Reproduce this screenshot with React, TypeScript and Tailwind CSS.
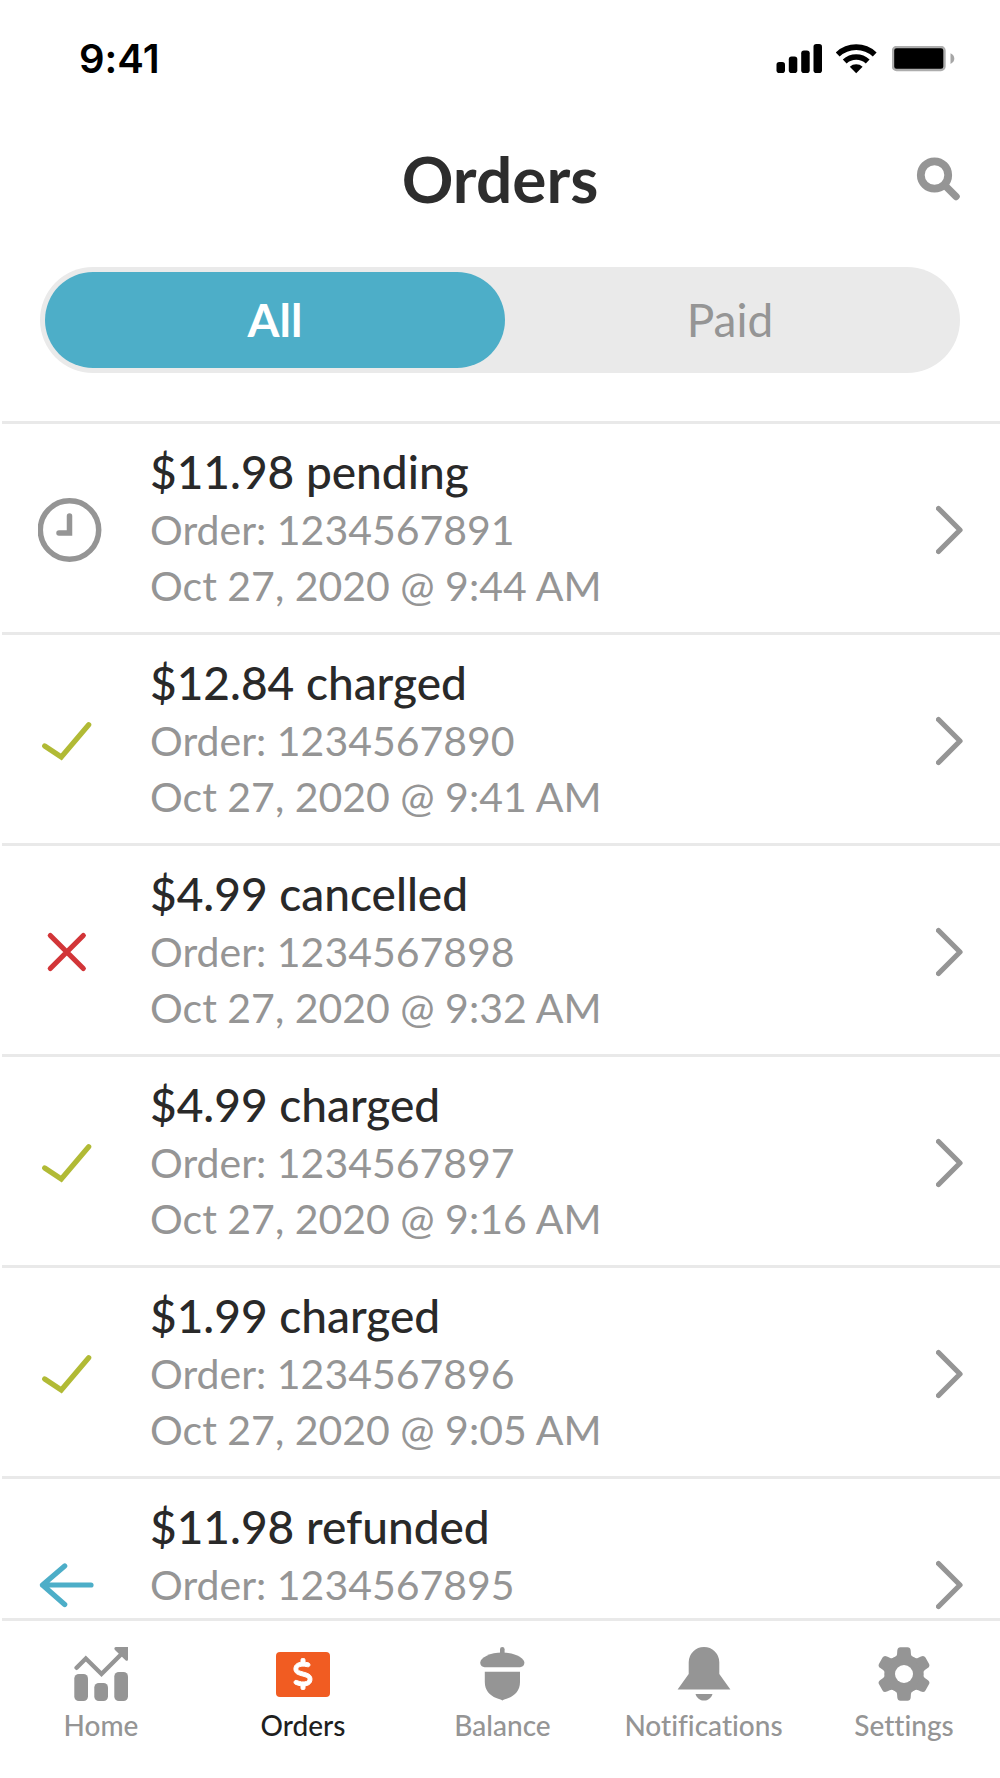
import React, { useState } from 'react';
import { FaDollarSign } from 'react-icons/fa6';

type Status = 'pending' | 'charged' | 'cancelled' | 'refunded';

interface Order {
  id: string;
  amount: string;
  status: Status;
  date?: string;
}

const orders: Order[] = [
  { id: '1234567891', amount: '$11.98', status: 'pending', date: 'Oct 27, 2020 @ 9:44 AM' },
  { id: '1234567890', amount: '$12.84', status: 'charged', date: 'Oct 27, 2020 @ 9:41 AM' },
  { id: '1234567898', amount: '$4.99', status: 'cancelled', date: 'Oct 27, 2020 @ 9:32 AM' },
  { id: '1234567897', amount: '$4.99', status: 'charged', date: 'Oct 27, 2020 @ 9:16 AM' },
  { id: '1234567896', amount: '$1.99', status: 'charged', date: 'Oct 27, 2020 @ 9:05 AM' },
  { id: '1234567895', amount: '$11.98', status: 'refunded' },
];

function StatusIcon({ status }: { status: Status }) {
  return (
    <svg
      viewBox="0 0 64 64"
      className="w-16 h-16 shrink-0"
      fill="none"
      strokeWidth="5.5"
      strokeLinecap="round"
      strokeLinejoin="round"
      aria-hidden="true"
    >
      {status === 'pending' && (
        <g stroke="#959595">
          <circle cx="31.500" cy="32" r="29.2" />
          <path d="M31.500 18v17H21" strokeLinejoin="miter" />
        </g>
      )}
      {status === 'charged' && <path d="M6.700 37l16.600 11L50.700 15.700" stroke="#b1ba35" strokeWidth="5.200" strokeLinejoin="miter" />}
      {status === 'cancelled' && <path d="M12.300 15.500l33 33M45.300 15.500l-33 33" stroke="#d23538" strokeWidth="5.200" />}
      {status === 'refunded' && <path d="M4.500 32H53M26.700 13L4.500 32l22.200 19.500" stroke="#4daec8" strokeWidth="5.200" />}
    </svg>
  );
}

function OrderRow({ order }: { order: Order }) {
  return (
    <li className="ml-0.5 h-[211px] border-t-[3px] border-[#e9e9e9]">
      <a href={`#order-${order.id}`} className="flex h-full items-center gap-12 pl-9 pr-9 pt-1">
        <StatusIcon status={order.status} />
        <div className="flex-1 h-[168px] leading-[56px] text-[41px] text-[#959595]">
          <h2 className="pb-1 text-[46px] leading-[52px] font-medium text-[#292929]">
            {order.amount} {order.status}
          </h2>
          <p>Order: {order.id}</p>
          {order.date && <p>{order.date}</p>}
        </div>
        <svg viewBox="0 0 28 50" className="w-7 h-[50px]" fill="none" stroke="#959595" strokeWidth="5.200" strokeLinecap="round" strokeLinejoin="round" aria-hidden="true">
          <path d="M2.500 3.500L24 25 2.500 46.500" />
        </svg>
      </a>
    </li>
  );
}

function StatusBar() {
  return (
    <div className="flex h-[118px] items-center justify-between pl-[79px] pr-[45px] text-black">
      <span className="font-['Inter',sans-serif] text-[40px] leading-[48px] font-semibold">9:41</span>
      <div className="flex items-center gap-3.5" aria-hidden="true">
        <svg viewBox="0 0 46 30" className="w-[46px] h-[30px]">
          <rect x="0.500" y="18" width="8.500" height="11" rx="2.800" />
          <rect x="12.800" y="12.500" width="8.500" height="16.500" rx="2.800" />
          <rect x="25.200" y="6.500" width="8.500" height="22.500" rx="2.800" />
          <rect x="37.500" y="0" width="8.500" height="29" rx="2.800" />
        </svg>
        <svg viewBox="0 0 42 30" className="w-[42px] h-[30px]" fill="none" stroke="#000" strokeWidth="5.600">
          <path d="M1.700 10.500a27 27 0 0 1 37 0" />
          <path d="M8.700 17.500a17 17 0 0 1 23 0" />
          <path d="M13.800 22.800a9.600 9.600 0 0 1 12.800 0L20.200 29.300z" fill="#000" stroke="none" />
        </svg>
        <svg viewBox="0 0 63 26" className="w-[63px] h-[26px]">
          <rect x="1" y="1" width="51.500" height="23" rx="3.500" fill="#000" stroke="#adadad" strokeWidth="2.400" />
          <path d="M58.500 7.300c2.600 1 3.800 3 3.800 5.300s-1.200 4.300-3.800 5.300z" fill="#a6a6a6" />
        </svg>
      </div>
    </div>
  );
}

function HomeIcon() {
  return (
    <svg viewBox="0 0 54 54" className="w-[54px] h-[54px]" fill="currentColor" aria-hidden="true">
      <rect x="0.300" y="27" width="13.700" height="27" rx="4.500" />
      <rect x="20.300" y="36" width="13.700" height="18" rx="4.500" />
      <rect x="40.300" y="25" width="13.700" height="29" rx="4.500" />
      <path d="M2.600 20.800L11.800 11.500 27.500 27 48 6.500" fill="none" stroke="currentColor" strokeWidth="4.400" strokeLinecap="round" />
      <path d="M42 0h12v12.300c0 1.600-1.500 1.900-2.500 1L41 3c-1.300-1.300-.6-3 1-3z" />
    </svg>
  );
}

function OrdersIcon() {
  return (
    <span className="flex h-[54px] items-center justify-center">
      <span className="flex h-[45px] w-[54px] items-center justify-center rounded bg-[#f15c22]">
        <FaDollarSign className="h-8 w-5 stroke-white stroke-[16px] text-white" aria-hidden="true" />
      </span>
    </span>
  );
}

function BalanceIcon() {
  return (
    <svg viewBox="0 0 45 54" className="w-[45px] h-[54px]" fill="currentColor" aria-hidden="true">
      <rect x="20" y="0" width="4.600" height="9" rx="2.300" />
      <path d="M22.300 5.500c12 0 22.100 5 22.100 10.300 0 2.600-2 4.400-4.400 4.400H4.600c-2.400 0-4.400-1.800-4.400-4.400C.2 10.500 10.300 5.500 22.300 5.500z" />
      <path d="M4.800 24.700h35.200V35c0 8.500-5 13.300-11.400 16-3 1-4.600 1.600-6.200 2.400-1.600-.8-3.200-1.400-6.200-2.400C9.800 48.300 4.800 43.500 4.800 35z" />
    </svg>
  );
}

function NotificationsIcon() {
  return (
    <svg viewBox="0 0 54 54" className="w-[54px] h-[54px]" fill="currentColor" aria-hidden="true">
      <path d="M11.700 15.300a15.300 15.300 0 0 1 30.600 0V27L53.400 42.500H.6L11.700 27z" />
      <path d="M18.500 47h17c-1.200 4-4.400 6.600-8.500 6.600s-7.300-2.600-8.500-6.600z" />
    </svg>
  );
}

function SettingsIcon() {
  return (
    <svg viewBox="-27 -27 54 54" className="w-[54px] h-[54px]" fill="currentColor" aria-hidden="true">
      <circle r="19.600" />
      {[0, 60, 120, 180, 240, 300].map((angle) => (
        <path
          key={angle}
          transform={`rotate(${angle})`}
          d="M-10-16.500Q-7-17.500-6.900-20.500L-6.700-23.500Q-6.300-26.800-3.500-26.800H3.500Q6.300-26.800 6.700-23.500L6.900-20.500Q7-17.500 10-16.500z"
        />
      ))}
      <circle r="9" fill="#fff" />
    </svg>
  );
}

const navItems = [
  { label: 'Home', icon: HomeIcon },
  { label: 'Orders', icon: OrdersIcon },
  { label: 'Balance', icon: BalanceIcon },
  { label: 'Notifications', icon: NotificationsIcon },
  { label: 'Settings', icon: SettingsIcon },
];

export default function App() {
  const [tab, setTab] = useState('All');

  return (
    <div className="flex h-screen w-full flex-col bg-white font-['Lato',sans-serif] [font-variant-ligatures:none]">
      <StatusBar />

      {/* Header */}
      <header className="grid h-[121px] grid-cols-[1fr_auto_1fr] items-center px-10">
        <h1 className="col-start-2 text-[64px] leading-[72px] font-bold text-[#2d2d2d]">Orders</h1>
        <button type="button" aria-label="Search" className="justify-self-end">
          <svg viewBox="0 0 44 44" className="w-11 h-11" fill="none" stroke="#959595" strokeLinecap="round">
            <circle cx="18.500" cy="18" r="13.700" strokeWidth="7.800" />
            <path d="M29.500 29L40 39.500" strokeWidth="7.400" />
          </svg>
        </button>
      </header>

      {/* Filter */}
      <div className="px-10 pt-7 pb-12">
        <div className="grid grid-cols-[460fr_450fr] rounded-full bg-[#eaeaea] p-[5px]">
          {['All', 'Paid'].map((name) => (
            <button
              key={name}
              type="button"
              onClick={() => setTab(name)}
              className={`h-24 rounded-full text-[46px] leading-[56px] ${
                tab === name ? 'bg-[#4daec8] font-bold text-white' : 'text-[#959595]'
              }`}
            >
              {name}
            </button>
          ))}
        </div>
      </div>

      {/* Orders */}
      <ul className="min-h-0 flex-1 overflow-hidden">
        {orders.map((order) => (
          <OrderRow key={order.id} order={order} />
        ))}
      </ul>

      {/* Bottom navigation */}
      <nav className="ml-0.5 grid h-40 shrink-0 grid-cols-[198fr_206fr_193fr_209fr_192fr] border-t-[3px] border-[#e9e9e9] pt-[26px]">
        {navItems.map(({ label, icon: Icon }) => (
          <a
            key={label}
            href={`#${label.toLowerCase()}`}
            className={`flex flex-col items-center gap-2 text-[28px] leading-[32px] font-medium ${
              label === 'Orders' ? 'text-[#1f1f1f]' : 'text-[#959595]'
            }`}
          >
            <Icon />
            <span>{label}</span>
          </a>
        ))}
      </nav>
    </div>
  );
}
